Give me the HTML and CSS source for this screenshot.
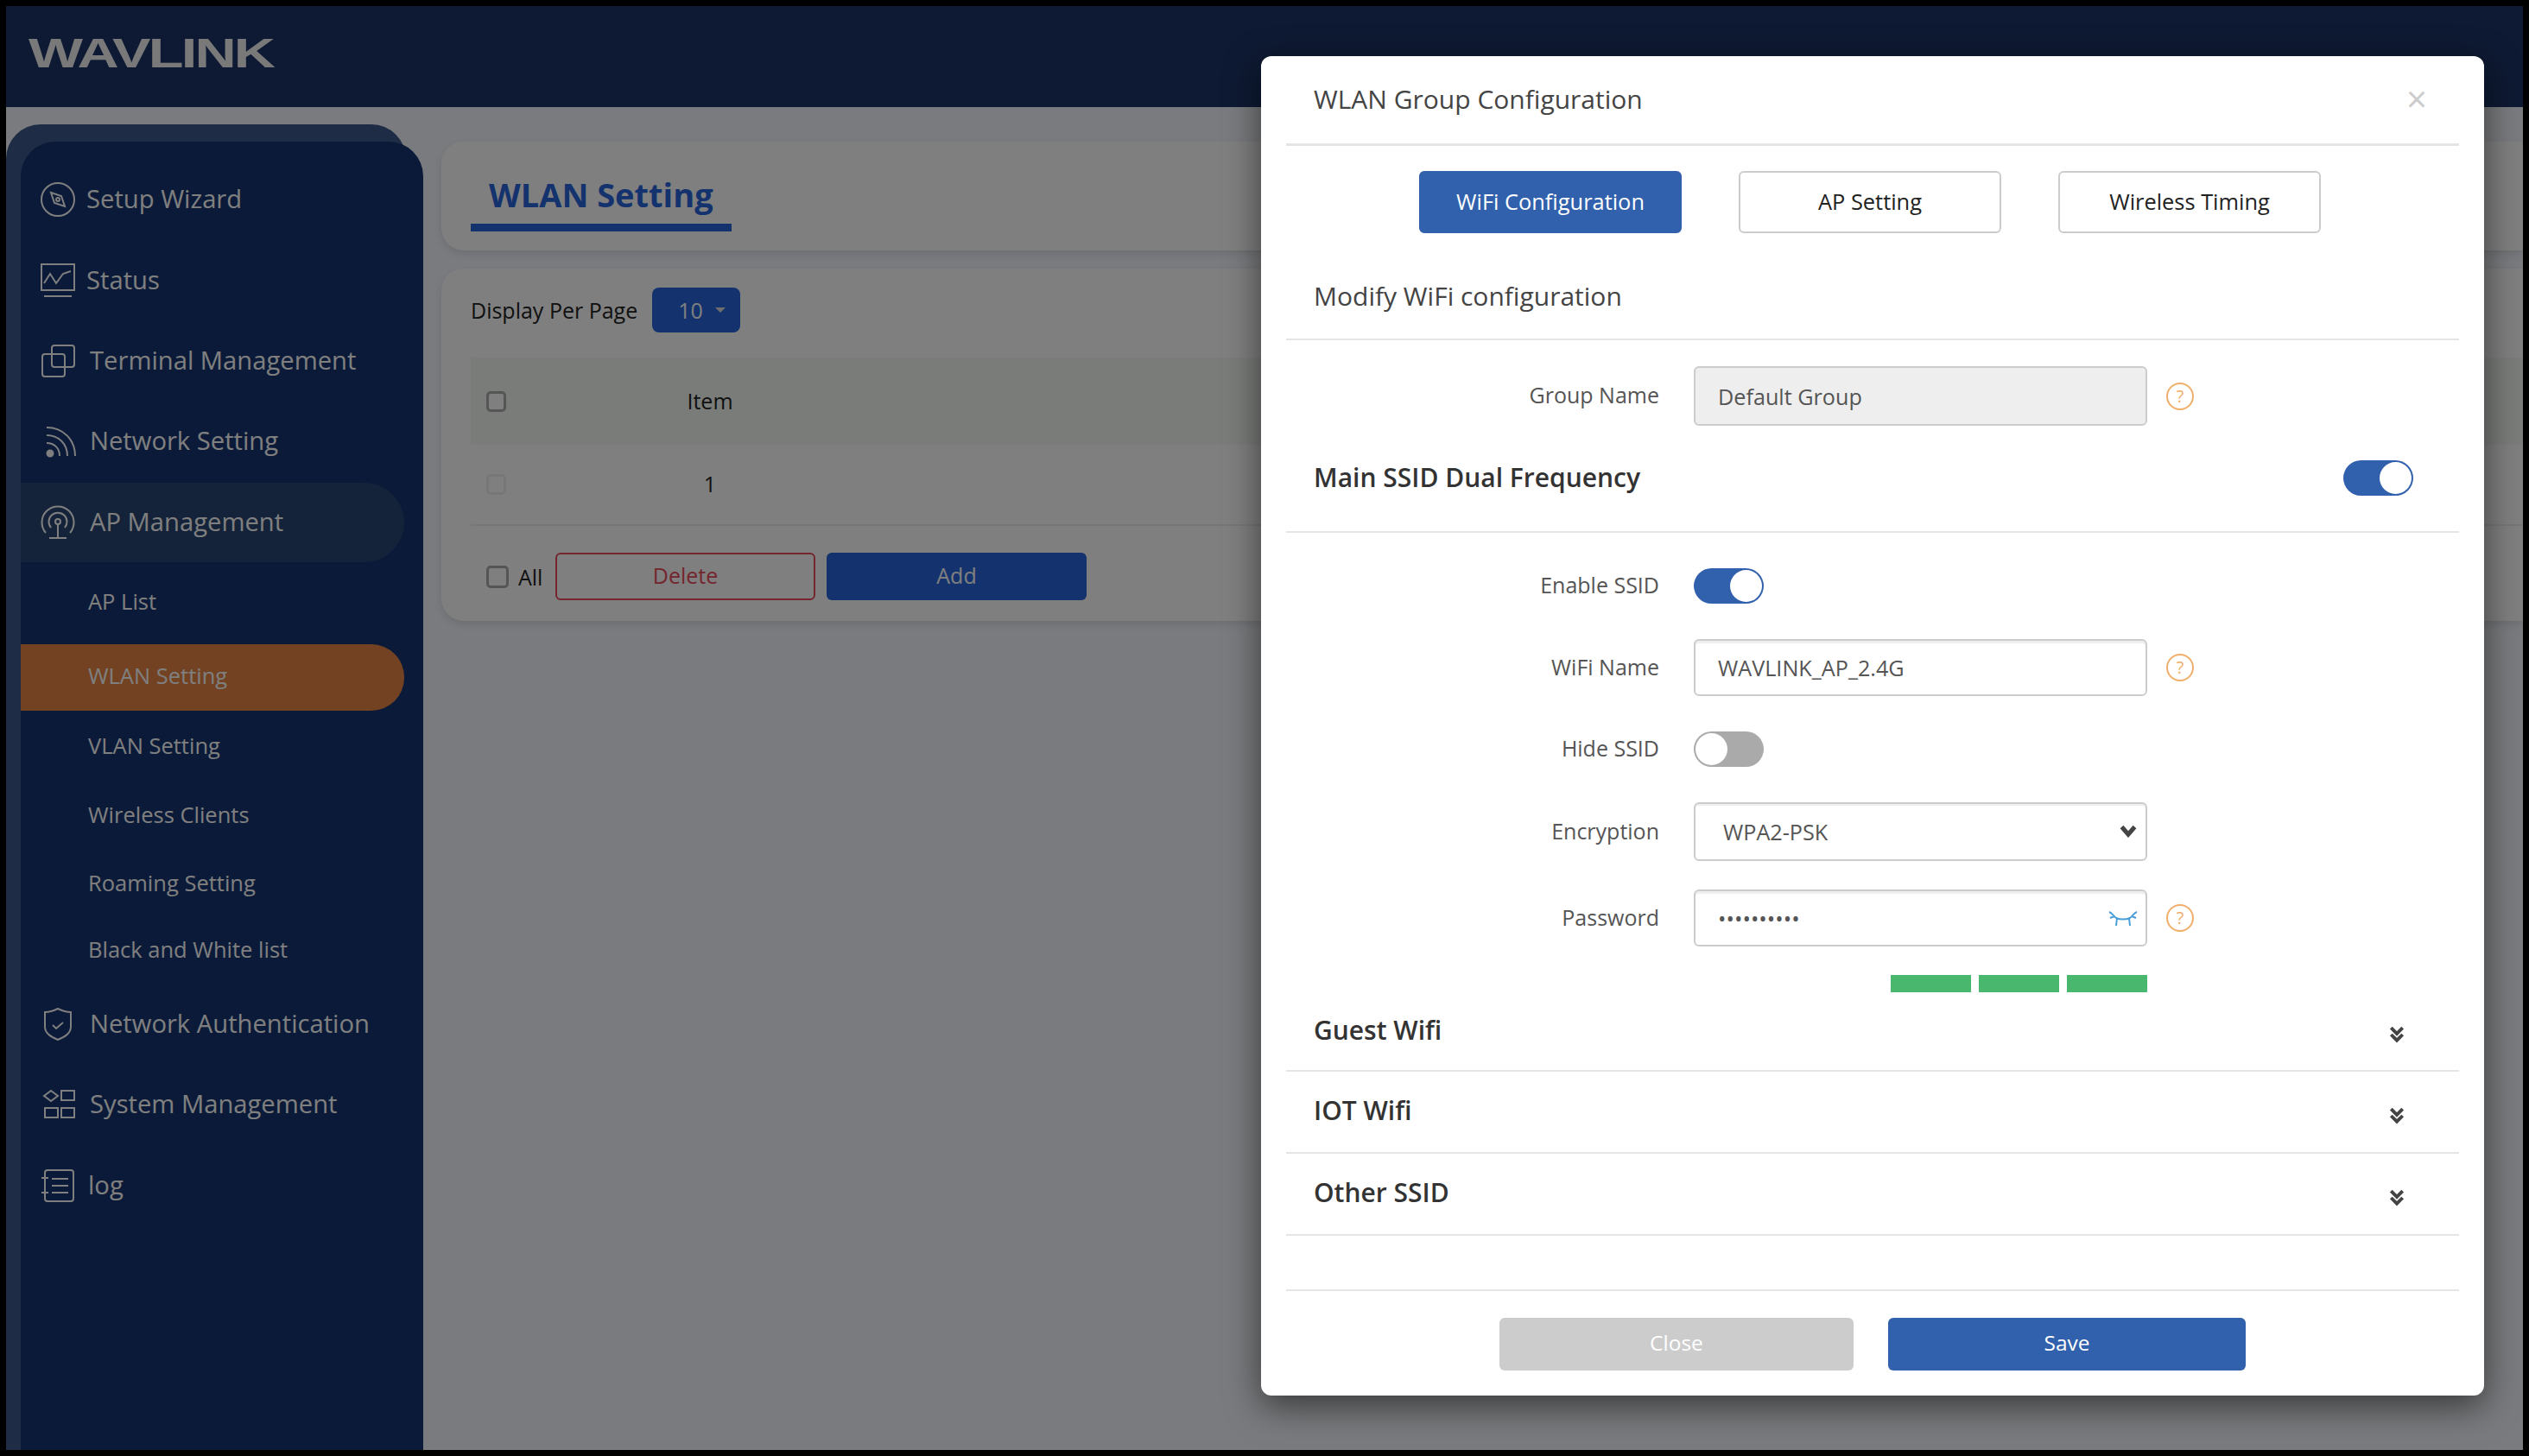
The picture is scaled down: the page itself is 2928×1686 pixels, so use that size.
FILE: index.html
```html
<!DOCTYPE html>
<html lang="en">
<head>
<meta charset="utf-8">
<title>WLAN Setting</title>
<link rel="stylesheet" href="styles.css">
</head>
<body>
<div class="frame">
  <header class="topbar"><span class="logo">WAVLINK</span></header>
  <div class="main">
    <aside class="sidebar">
      <nav class="nav">
        <a class="item tight">
          <svg class="ico" viewBox="0 0 42 42"><circle cx="21" cy="21" r="19"/><path d="M13 13l12 4 4 12-12-4z"/><circle cx="21" cy="21" r="2"/></svg>
          <span>Setup Wizard</span></a>
        <a class="item tight">
          <svg class="ico" viewBox="0 0 42 42"><rect x="2" y="2" width="38" height="30"/><path d="M5 24l7-11 7 11 8-11 9-3"/><path d="M5 39h32"/></svg>
          <span>Status</span></a>
        <a class="item">
          <svg class="ico" viewBox="0 0 42 42"><rect x="14" y="3" width="26" height="25" rx="3"/><rect x="3" y="13" width="26" height="26" rx="3"/></svg>
          <span>Terminal Management</span></a>
        <a class="item">
          <svg class="ico" viewBox="0 0 42 42"><circle cx="12" cy="35" r="3.500" class="solid"/><path d="M8 23c9 0 15 6 15 15M8 14c14 0 24 10 24 24M8 5c19 0 33 14 33 33"/></svg>
          <span>Network Setting</span></a>
        <a class="item open">
          <svg class="ico" viewBox="0 0 42 42"><path d="M7 33a18.500 18.500 0 1 1 28 0"/><path d="M13 27a10.500 10.500 0 1 1 16 0"/><circle cx="21" cy="20" r="3"/><path d="M21 23v15M11 39h20"/></svg>
          <span>AP Management</span></a>
        <a class="item sub">AP List</a>
        <a class="item sub active">WLAN Setting</a>
        <a class="item sub">VLAN Setting</a>
        <a class="item sub">Wireless Clients</a>
        <a class="item sub">Roaming Setting</a>
        <a class="item sub">Black and White list</a>
        <a class="item">
          <svg class="ico" viewBox="0 0 42 42"><path d="M6 7c5 0 10-1.500 15-4 5 2.500 10 4 15 4v17c0 8-8 12-15 15-7-3-15-7-15-15z"/><path d="M15 22l4 4 8-7"/></svg>
          <span>Network Authentication</span></a>
        <a class="item">
          <svg class="ico" viewBox="0 0 42 42"><path d="M13 5l8 6-8 6-8-6z"/><rect x="25" y="5" width="15" height="11"/><rect x="6" y="25" width="15" height="11"/><rect x="25" y="25" width="15" height="11"/></svg>
          <span>System Management</span></a>
        <a class="item tight-log">
          <svg class="ico" viewBox="0 0 42 42"><rect x="6" y="3" width="33" height="36" rx="3"/><path d="M14 13h19M14 21h19M14 29h19M2 12h8M2 29h8"/></svg>
          <span>log</span></a>
      </nav>
    </aside>
    <main class="content">
      <section class="card card-title"><h1 class="page-title">WLAN Setting</h1></section>
      <section class="card card-table">
        <div class="per-page"><span>Display Per Page</span><span class="pager">10<i class="caret"></i></span></div>
        <div class="table">
          <div class="tr th"><span class="cell-check"><input type="checkbox" class="check"></span><span class="cell-item">Item</span></div>
          <div class="tr td"><span class="cell-check"><input type="checkbox" class="check faint"></span><span class="cell-item">1</span></div>
        </div>
        <div class="table-foot">
          <label class="all"><input type="checkbox" class="check big"><span>All</span></label>
          <button class="btn btn-del">Delete</button>
          <button class="btn btn-add">Add</button>
        </div>
      </section>
    </main>
  </div>
  <div class="overlay"></div>
  <div class="modal">
    <div class="modal-head"><span>WLAN Group Configuration</span><span class="close">&times;</span></div>
    <div class="tabs">
      <button class="tab on">WiFi Configuration</button>
      <button class="tab">AP Setting</button>
      <button class="tab">Wireless Timing</button>
    </div>
    <div class="subhead">Modify WiFi configuration</div>
    <div class="row row-first">
      <label class="lbl">Group Name</label>
      <input class="field ro" value="Default Group" readonly>
      <span class="help">?</span>
    </div>
    <div class="band">
      <span>Main SSID Dual Frequency</span>
      <span class="toggle on"></span>
    </div>
    <div class="form">
      <div class="row"><label class="lbl">Enable SSID</label><span class="toggle on"></span></div>
      <div class="row"><label class="lbl">WiFi Name</label><input class="field" value="WAVLINK_AP_2.4G"><span class="help">?</span></div>
      <div class="row"><label class="lbl">Hide SSID</label><span class="toggle"></span></div>
      <div class="row"><label class="lbl">Encryption</label>
        <span class="select-wrap"><select class="field sel"><option>WPA2-PSK</option></select>
          <svg class="sel-arrow" viewBox="0 0 16 12"><path d="M2 2l6 7 6-7"/></svg></span></div>
      <div class="row row-near"><label class="lbl">Password</label>
        <span class="pass-wrap"><input class="field" type="password" value="1234567890">
          <svg class="eye" viewBox="0 0 36 22"><path d="M2 3c3 1 5 5 8 7 5 2 11 2 16 0 3-2 5-6 8-7M11 10l-1 9M25 10l1 9M3 10l5-2M33 10l-5-2"/></svg></span>
        <span class="help">?</span></div>
      <div class="strength"><i></i><i></i><i></i></div>
    </div>
    <div class="fold"><span>Guest Wifi</span><svg class="chev" viewBox="0 0 16 18"><path d="M2 2l6 6 6-6M2 9l6 6 6-6"/></svg></div>
    <div class="fold"><span>IOT Wifi</span><svg class="chev" viewBox="0 0 16 18"><path d="M2 2l6 6 6-6M2 9l6 6 6-6"/></svg></div>
    <div class="fold"><span>Other SSID</span><svg class="chev" viewBox="0 0 16 18"><path d="M2 2l6 6 6-6M2 9l6 6 6-6"/></svg></div>
    <div class="modal-foot">
      <button class="act act-close">Close</button>
      <button class="act act-save">Save</button>
    </div>
  </div>
</div>
</body>
</html>
```
FILE: styles.css
```css
* { box-sizing: border-box; }
html, body { margin: 0; padding: 0; background: #000; }
body { font-family: "Open Sans", "Liberation Sans", sans-serif; color: #333; }
button, input, select { font-family: inherit; }

.frame {
  position: relative;
  margin: 7px 0 0 7px;
  width: 2914px;
  height: 1672px;
  overflow: hidden;
  background: #f4f6fc;
  display: flex;
  flex-direction: column;
}

.topbar { height: 117px; flex: none; background: #1c3466; padding: 37px 0 0 26px; }
.logo {
  display: block;
  width: 264px;
  font: 700 48px/36px "Liberation Sans", sans-serif;
  letter-spacing: -2px;
  color: #f2f2f2;
  white-space: nowrap;
  transform: scaleX(1.39);
  transform-origin: left center;
}

.main { flex: 1; display: flex; min-height: 0; }

.sidebar {
  flex: none;
  width: 463px;
  margin-top: 20px;
  padding: 20px 0 0 17px;
  background: #3c588a;
  border-radius: 40px 40px 0 0;
}
.nav {
  width: 466px;
  height: 100%;
  padding-top: 20px;
  background: #143470;
  border-radius: 40px 40px 0 0;
  display: flex;
  flex-direction: column;
}
.item {
  display: flex;
  align-items: center;
  gap: 16px;
  padding-left: 22px;
  width: 444px;
  height: 93px;
  flex: none;
  color: #fff;
  font-size: 29.2px;
  white-space: nowrap;
}
.item span { margin-top: -2px; }
.item.tight { gap: 12px; }
.item.tight-log { gap: 14px; }
.item:nth-child(2) { height: 95px; }
.item:nth-child(3) { height: 91px; }
.item:nth-child(4) { height: 96px; }
.item:nth-child(5) { height: 92px; }
.item:nth-child(12) { height: 96px; }
.item:nth-child(13) { height: 90px; }
.item:nth-child(14) { height: 98px; }
.item.open { background: #284672; border-radius: 0 46px 46px 0; }
.item.sub { padding-left: 78px; height: 80px; font-size: 25.5px; }
.item:nth-child(6) { height: 90px; margin-bottom: 5px; }
.item.active { height: 77px; background: #e68444; border-radius: 0 38px 38px 0; padding-bottom: 5px; }
.item:nth-child(10) { height: 77px; }
.item:nth-child(11) { height: 78px; }

.ico { width: 42px; height: 42px; flex: none; fill: none; stroke: #fff; stroke-width: 2; }
.ico .solid { fill: #fff; }

.content { flex: 1; min-width: 0; padding: 40px 0 0 41px; }
.card { background: #fff; border-radius: 26px 0 0 26px; box-shadow: 0 4px 8px rgba(0, 0, 0, .1); }
.card-title { height: 126px; padding: 31px 0 0 34px; margin-bottom: 21px; }
.page-title {
  display: inline-block;
  margin: 0;
  width: 302px;
  height: 73px;
  padding: 0 0 0 21px;
  border-bottom: 9px solid #2866dc;
  font-size: 38px;
  line-height: 60px;
  font-weight: 700;
  color: #2866dc;
}
.card-table { height: 408px; padding: 22px 0 0 34px; }
.per-page { display: flex; align-items: center; gap: 17px; height: 52px; margin-bottom: 29px; font-size: 25px; color: #222; }
.pager {
  width: 102px;
  height: 52px;
  display: flex;
  align-items: center;
  padding-left: 30px;
  gap: 14px;
  border-radius: 8px;
  background: #2866dc;
  color: #fff;
  font-size: 25px;
}
.caret { width: 0; height: 0; border: 6px solid transparent; border-top-color: #ddd; border-bottom: 0; }
.tr { display: grid; grid-template-columns: 100px 354px; align-items: center; }
.th { height: 101px; background: #f4f8f4; }
.td { height: 94px; border-bottom: 2px solid #eee; }
.cell-check { padding-left: 18px; display: flex; }
.cell-item { text-align: center; font-size: 25px; color: #222; margin-top: -2px; }
.check {
  appearance: none;
  margin: 0;
  width: 23px;
  height: 24px;
  border: 3px solid #aaa;
  border-radius: 5px;
  background: #fff;
}
.check.faint { border-color: #eee; }
.check.big { width: 26px; height: 26px; }
.table-foot { display: flex; align-items: center; margin-top: 31px; padding-left: 18px; }
.all { display: flex; align-items: center; gap: 11px; width: 80px; font-size: 25px; color: #222; }
.btn { width: 301px; height: 55px; border-radius: 6px; font-size: 25px; padding: 0 0 3px; }
.btn-del { background: #fff; border: 2px solid #e84a5c; color: #e84a5c; margin-right: 13px; }
.btn-add { background: #2866dc; border: 0; color: #fff; }

.overlay { position: absolute; inset: 0; background: rgba(0, 0, 0, .5); }

.modal {
  position: absolute;
  left: 1453px;
  top: 58px;
  width: 1416px;
  height: 1551px;
  padding: 0 29px;
  background: #fff;
  border-radius: 12px;
  box-shadow: 0 12px 40px rgba(0, 0, 0, .55);
}
.modal-head {
  height: 104px;
  padding: 0 37px 3px 32px;
  display: flex;
  align-items: center;
  justify-content: space-between;
  border-bottom: 3px solid #e5e5e5;
  font-size: 30px;
  color: #444;
}
.close { font-size: 42px; line-height: 1; color: #ccc; }
.tabs { display: flex; gap: 66px; padding: 29px 0 0 154px; }
.tab {
  width: 304px;
  height: 72px;
  padding: 0 0 3px;
  background: #fff;
  border: 2px solid #ccc;
  border-radius: 6px;
  font-size: 25.4px;
  color: #222;
}
.tab.on { background: #3161ac; border-color: #3161ac; color: #fff; }
.subhead {
  height: 124px;
  padding: 22px 0 0 32px;
  display: flex;
  align-items: center;
  border-bottom: 2px solid #e5e5e5;
  font-size: 30px;
  color: #444;
}

.row { display: flex; align-items: center; gap: 40px; margin-top: 41px; }
.row-first { margin-top: 30px; }
.row-near { margin-top: 33px; }
.lbl { width: 432px; flex: none; text-align: right; font-size: 25px; color: #555; padding-bottom: 3px; }
.field {
  width: 525px;
  height: 66px;
  padding: 0 26px;
  border: 2px solid #ccc;
  border-radius: 6px;
  box-shadow: inset 0 3px 0 #eee;
  background: #fff;
  font-size: 25.2px;
  color: #555;
  outline: 0;
}
.field.ro { height: 69px; background: #eee; }
.sel { height: 68px; appearance: none; padding-left: 32px; box-shadow: inset 0 2px 0 #eee; display: block; }
.select-wrap, .pass-wrap { position: relative; display: block; width: 525px; flex: none; }
.pass-wrap .field { display: block; }
.sel-arrow {
  position: absolute;
  right: 12px;
  top: 26px;
  width: 20px;
  height: 15px;
  fill: none;
  stroke: #444;
  stroke-width: 4;
}
.eye {
  position: absolute;
  right: 10px;
  top: 23px;
  width: 36px;
  height: 22px;
  fill: none;
  stroke: #4a9fd8;
  stroke-width: 2;
}
.help {
  width: 32px;
  height: 32px;
  margin-left: -18px;
  border: 2px solid #f0ae6a;
  border-radius: 50%;
  display: flex;
  align-items: center;
  justify-content: center;
  font-size: 20px;
  line-height: 1;
  color: #f0ae6a;
}
.band {
  height: 124px;
  padding: 0 53px 4px 32px;
  display: flex;
  align-items: center;
  justify-content: space-between;
  border-bottom: 2px solid #e5e5e5;
  font-size: 30px;
  font-weight: 600;
  color: #333;
}
.band .toggle { margin-top: 2px; }
.toggle {
  position: relative;
  display: block;
  width: 81px;
  height: 41px;
  flex: none;
  border-radius: 21px;
  background: #aaa;
}
.toggle::after {
  content: "";
  position: absolute;
  top: 2px;
  left: 2px;
  width: 37px;
  height: 37px;
  border-radius: 50%;
  background: #fff;
}
.toggle.on { background: #3161ac; }
.toggle.on::after { left: 42px; }
.strength { display: flex; justify-content: flex-end; gap: 9px; width: 997px; margin-top: 33px; }
.strength i { display: block; width: 93px; height: 20px; background: #4ab76e; }
.fold {
  height: 95px;
  padding: 0 63px 4px 32px;
  display: flex;
  align-items: center;
  justify-content: space-between;
  border-bottom: 2px solid #e5e5e5;
  font-size: 30px;
  font-weight: 600;
  color: #333;
}
.form + .fold { height: 92px; }
.chev { width: 18px; height: 20px; margin-top: 12px; fill: none; stroke: #444; stroke-width: 3.5; }
.modal-foot {
  display: flex;
  gap: 40px;
  margin-top: 62px;
  padding: 31px 0 0 247px;
  border-top: 2px solid #e5e5e5;
}
.act { height: 61px; padding: 0 0 4px; border: 0; border-radius: 6px; color: #fff; font-size: 24.5px; }
.act-close { width: 410px; background: #ccc; }
.act-save { width: 414px; background: #3161ac; }
```
